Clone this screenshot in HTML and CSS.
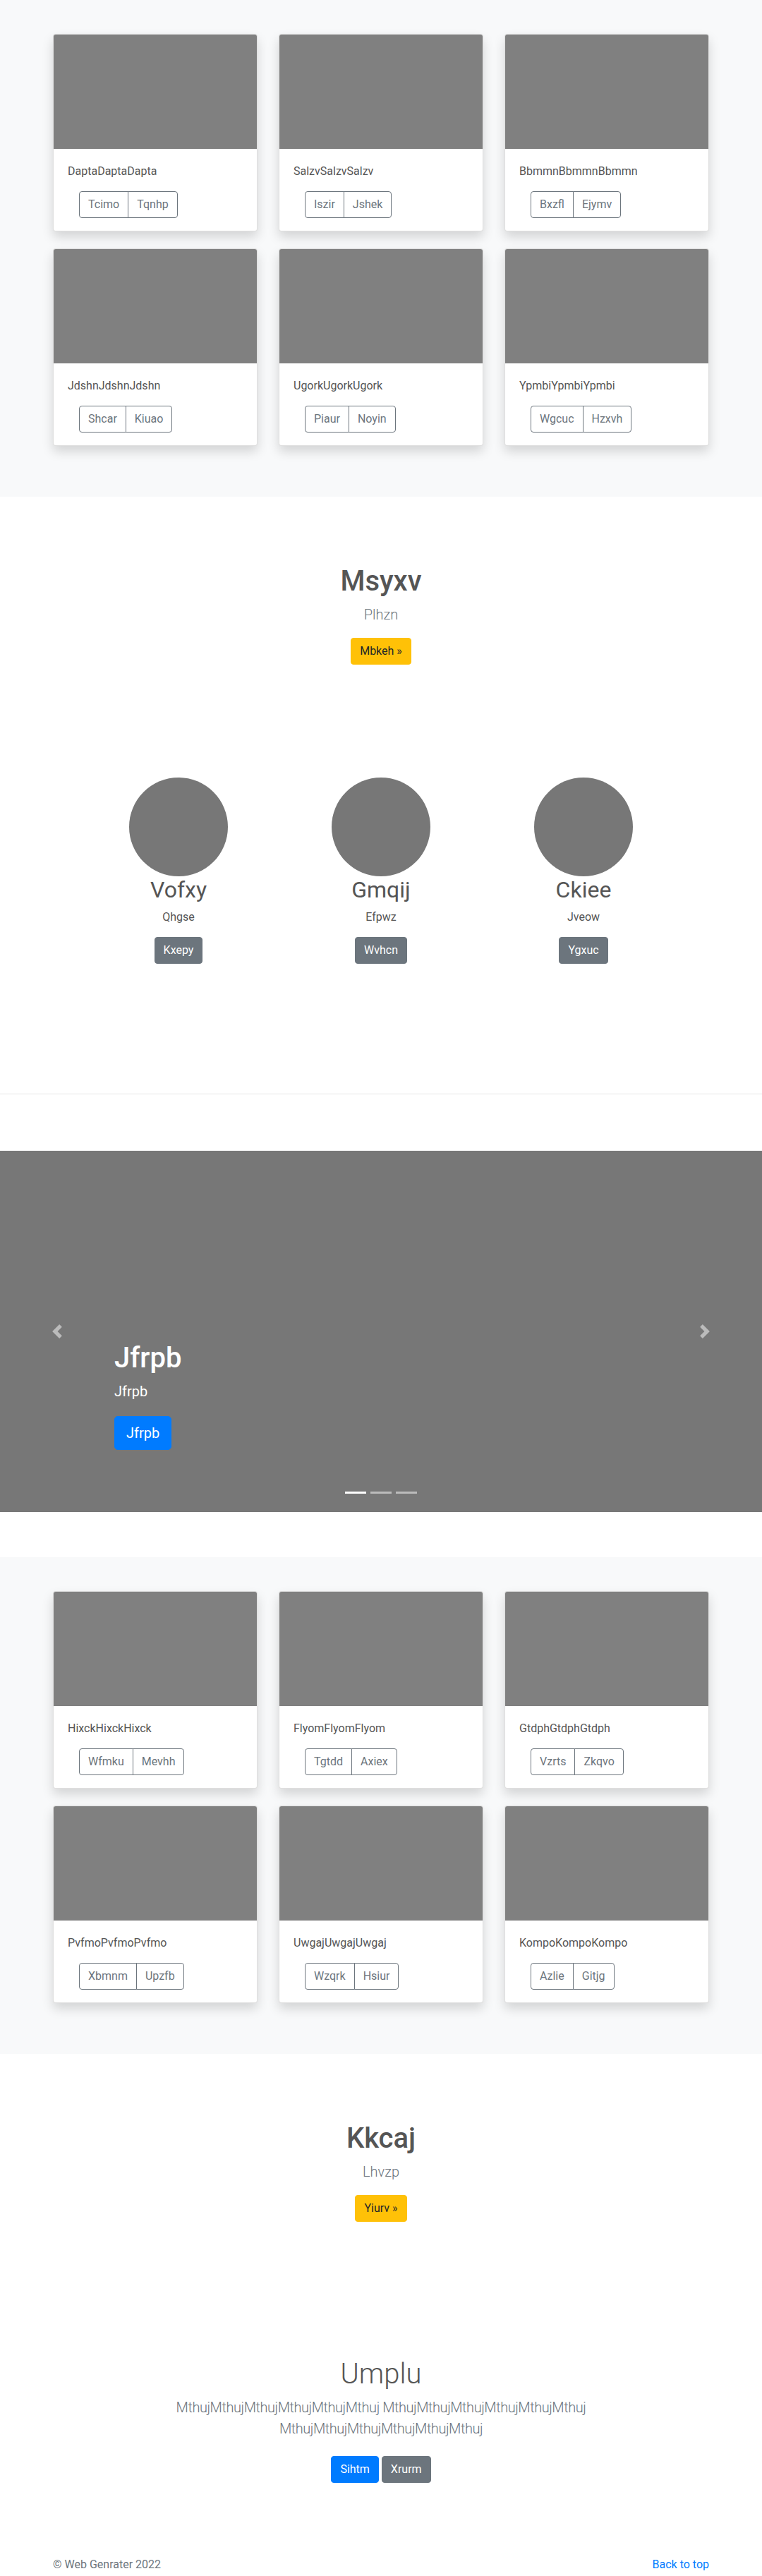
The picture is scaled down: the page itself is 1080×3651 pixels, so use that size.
FILE: index.html
```html
<!DOCTYPE html>
<html lang="en">
<head>
<meta charset="utf-8">
<title>Web Genrater</title>
<link rel="stylesheet" href="styles.css">
</head>
<body>
<section class="album">
  <div class="card-grid">
    <div class="card"><div class="card-img"></div><div class="card-body"><p class="card-text">DaptaDaptaDapta</p><div class="btn-group"><a class="btn-outline">Tcimo</a><a class="btn-outline">Tqnhp</a></div></div></div>
    <div class="card"><div class="card-img"></div><div class="card-body"><p class="card-text">SalzvSalzvSalzv</p><div class="btn-group"><a class="btn-outline">Iszir</a><a class="btn-outline">Jshek</a></div></div></div>
    <div class="card"><div class="card-img"></div><div class="card-body"><p class="card-text">BbmmnBbmmnBbmmn</p><div class="btn-group"><a class="btn-outline">Bxzfl</a><a class="btn-outline">Ejymv</a></div></div></div>
    <div class="card"><div class="card-img"></div><div class="card-body"><p class="card-text">JdshnJdshnJdshn</p><div class="btn-group"><a class="btn-outline">Shcar</a><a class="btn-outline">Kiuao</a></div></div></div>
    <div class="card"><div class="card-img"></div><div class="card-body"><p class="card-text">UgorkUgorkUgork</p><div class="btn-group"><a class="btn-outline">Piaur</a><a class="btn-outline">Noyin</a></div></div></div>
    <div class="card"><div class="card-img"></div><div class="card-body"><p class="card-text">YpmbiYpmbiYpmbi</p><div class="btn-group"><a class="btn-outline">Wgcuc</a><a class="btn-outline">Hzxvh</a></div></div></div>
  </div>
</section>

<section class="hero hero-first">
  <h1 class="hero-title">Msyxv</h1>
  <p class="lead">Plhzn</p>
  <a class="btn btn-warning">Mbkeh »</a>
</section>

<div class="marketing">
  <div class="feature">
    <div class="circle"></div>
    <h2 class="feature-title">Vofxy</h2>
    <p class="feature-text">Qhgse</p>
    <a class="btn btn-secondary">Kxepy</a>
  </div>
  <div class="feature">
    <div class="circle"></div>
    <h2 class="feature-title">Gmqij</h2>
    <p class="feature-text">Efpwz</p>
    <a class="btn btn-secondary">Wvhcn</a>
  </div>
  <div class="feature">
    <div class="circle"></div>
    <h2 class="feature-title">Ckiee</h2>
    <p class="feature-text">Jveow</p>
    <a class="btn btn-secondary">Ygxuc</a>
  </div>
</div>

<hr class="divider">

<div class="carousel">
  <div class="carousel-control control-prev">
    <svg width="20" height="20" viewBox="0 0 8 8" fill="#fff"><path d="M5.25 0l-4 4 4 4 1.5-1.5-2.5-2.5 2.5-2.5-1.5-1.5z"/></svg>
  </div>
  <div class="carousel-caption">
    <h1 class="caption-title">Jfrpb</h1>
    <p class="caption-text">Jfrpb</p>
    <a class="btn btn-lg btn-primary">Jfrpb</a>
  </div>
  <div class="carousel-control control-next">
    <svg width="20" height="20" viewBox="0 0 8 8" fill="#fff"><path d="M2.75 0l-1.5 1.5 2.5 2.5-2.5 2.5 1.5 1.5 4-4-4-4z"/></svg>
  </div>
  <ol class="indicators">
    <li class="indicator active"></li>
    <li class="indicator"></li>
    <li class="indicator"></li>
  </ol>
</div>

<section class="album">
  <div class="card-grid">
    <div class="card"><div class="card-img"></div><div class="card-body"><p class="card-text">HixckHixckHixck</p><div class="btn-group"><a class="btn-outline">Wfmku</a><a class="btn-outline">Mevhh</a></div></div></div>
    <div class="card"><div class="card-img"></div><div class="card-body"><p class="card-text">FlyomFlyomFlyom</p><div class="btn-group"><a class="btn-outline">Tgtdd</a><a class="btn-outline">Axiex</a></div></div></div>
    <div class="card"><div class="card-img"></div><div class="card-body"><p class="card-text">GtdphGtdphGtdph</p><div class="btn-group"><a class="btn-outline">Vzrts</a><a class="btn-outline">Zkqvo</a></div></div></div>
    <div class="card"><div class="card-img"></div><div class="card-body"><p class="card-text">PvfmoPvfmoPvfmo</p><div class="btn-group"><a class="btn-outline">Xbmnm</a><a class="btn-outline">Upzfb</a></div></div></div>
    <div class="card"><div class="card-img"></div><div class="card-body"><p class="card-text">UwgajUwgajUwgaj</p><div class="btn-group"><a class="btn-outline">Wzqrk</a><a class="btn-outline">Hsiur</a></div></div></div>
    <div class="card"><div class="card-img"></div><div class="card-body"><p class="card-text">KompoKompoKompo</p><div class="btn-group"><a class="btn-outline">Azlie</a><a class="btn-outline">Gitjg</a></div></div></div>
  </div>
</section>

<section class="hero hero-second">
  <h1 class="hero-title">Kkcaj</h1>
  <p class="lead">Lhvzp</p>
  <a class="btn btn-warning">Yiurv »</a>
</section>

<section class="jumbo">
  <h1 class="jumbo-title">Umplu</h1>
  <p class="lead jumbo-lead">MthujMthujMthujMthujMthujMthuj MthujMthujMthujMthujMthujMthuj MthujMthujMthujMthujMthujMthuj</p>
  <div class="jumbo-actions">
    <a class="btn btn-primary">Sihtm</a>
    <a class="btn btn-secondary">Xrurm</a>
  </div>
</section>

<footer class="footer">
  <p class="footer-text">© Web Genrater 2022</p>
  <a class="footer-link" href="#">Back to top</a>
</footer>
</body>
</html>
```

FILE: styles.css
```css
* { box-sizing: border-box; }

html, body {
  margin: 0;
  padding: 0;
}

body {
  font-family: Roboto, "Noto Sans", "Liberation Sans", sans-serif;
  font-size: 16px;
  line-height: 1.5;
  color: #555;
  background: #fff;
}

p { margin: 0; }
h1, h2 { margin: 0; }

/* ---------- buttons ---------- */
.btn {
  display: inline-block;
  padding: 6px 12px;
  font-size: 16px;
  line-height: 24px;
  border: 1px solid transparent;
  border-radius: 4px;
  text-decoration: none;
  cursor: pointer;
}
.btn-warning { background: #ffc107; border-color: #ffc107; color: #212529; }
.btn-secondary { background: #6c757d; border-color: #6c757d; color: #fff; }
.btn-primary { background: #007bff; border-color: #007bff; color: #fff; }
.btn-lg {
  padding: 8px 16px;
  font-size: 20px;
  line-height: 30px;
  border-radius: 5px;
}

/* ---------- album ---------- */
.album {
  background: #f8f9fa;
  padding: 48px 0 72px;
}
.card-grid {
  width: 930px;
  margin: 0 auto;
  display: grid;
  grid-template-columns: repeat(3, 290px);
  column-gap: 30px;
  row-gap: 24px;
}
.card {
  background: #fff;
  border: 1px solid rgba(0,0,0,.125);
  border-radius: 4px;
  overflow: hidden;
  box-shadow: 0 8px 16px rgba(0,0,0,.15);
}
.card-img {
  height: 162px;
  background: #808080;
}
.card-body {
  padding: 20px 20px 18px;
}
.card-text {
  margin-bottom: 16px;
  color: #555;
}
.btn-group {
  display: inline-flex;
  margin-left: 16px;
}
.btn-outline {
  padding: 6px 12px;
  line-height: 24px;
  font-size: 16px;
  color: #6c757d;
  border: 1px solid #6c757d;
}
.btn-outline:first-child { border-radius: 4px 0 0 4px; }
.btn-outline + .btn-outline { margin-left: -1px; border-radius: 0 4px 4px 0; }

/* ---------- hero ---------- */
.hero {
  text-align: center;
  padding-top: 96px;
}
.hero-title {
  font-size: 40px;
  font-weight: 500;
  line-height: 48px;
  margin-bottom: 8px;
  color: #555;
}
.lead {
  font-size: 20px;
  font-weight: 300;
  line-height: 30px;
  color: #6c757d;
  margin-bottom: 18px;
}

/* ---------- marketing ---------- */
.marketing {
  display: grid;
  grid-template-columns: repeat(3, 287px);
  justify-content: center;
  padding: 160px 0 184px;
  text-align: center;
}
.circle {
  width: 140px;
  height: 140px;
  border-radius: 50%;
  background: #777;
  margin: 0 auto;
}
.feature-title {
  font-size: 32px;
  font-weight: 400;
  line-height: 38px;
  margin-bottom: 8px;
  color: #555;
}
.feature-text {
  margin-bottom: 16px;
}

.divider {
  margin: 0 0 80px;
  border: 0;
  border-top: 1px solid #e6e6e6;
  height: 0;
}

/* ---------- carousel ---------- */
.carousel {
  position: relative;
  height: 512px;
  background: #777;
  margin-bottom: 64px;
}
.carousel-caption {
  position: absolute;
  left: 162px;
  right: 162px;
  bottom: 48px;
  padding: 20px 0;
  color: #fff;
}
.caption-title {
  font-size: 40px;
  font-weight: 500;
  line-height: 48px;
  margin-bottom: 8px;
}
.caption-text {
  font-size: 20px;
  line-height: 30px;
  margin-bottom: 20px;
}
.caption-text + .btn { margin-bottom: 20px; }
.carousel-control {
  position: absolute;
  top: 0;
  bottom: 0;
  width: 162px;
  display: flex;
  align-items: center;
  justify-content: center;
  opacity: .5;
}
.control-prev { left: 0; }
.control-next { right: 0; }
.indicators {
  position: absolute;
  left: 0;
  right: 0;
  bottom: 16px;
  margin: 0;
  padding: 0;
  list-style: none;
  display: flex;
  justify-content: center;
}
.indicator {
  width: 30px;
  height: 23px;
  margin: 0 3px;
  border-top: 10px solid transparent;
  border-bottom: 10px solid transparent;
  background: #fff;
  background-clip: padding-box;
  opacity: .5;
}
.indicator.active { opacity: 1; }

/* ---------- second hero / jumbotron ---------- */
.jumbo {
  text-align: center;
  padding-top: 192px;
  width: 610px;
  margin: 0 auto;
}
.jumbo-title {
  font-size: 40px;
  font-weight: 300;
  line-height: 48px;
  margin-bottom: 8px;
  color: #555;
}
.jumbo-lead {
  margin-bottom: 24px;
  letter-spacing: -0.45px;
}
.jumbo-actions {
  display: flex;
  justify-content: center;
  gap: 4px;
}

/* ---------- footer ---------- */
.footer {
  width: 930px;
  margin: 0 auto;
  padding-top: 104px;
  display: flex;
  justify-content: space-between;
  line-height: 24px;
  color: #6c757d;
}
.footer-link {
  color: #007bff;
  text-decoration: none;
}
```
